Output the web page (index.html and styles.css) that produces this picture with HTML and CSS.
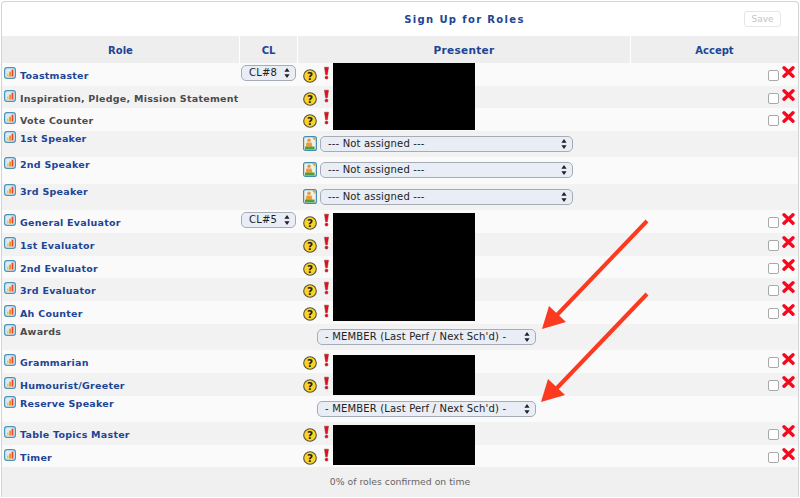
FILE: index.html
```html
<!DOCTYPE html>
<html lang="en">
<head>
<meta charset="utf-8">
<title>Sign Up for Roles</title>
<link rel="stylesheet" href="styles.css">
</head>
<body>
<svg width="0" height="0" class="defs">
  <defs>
    <symbol id="i-stat" viewBox="0 0 12 12">
      <rect x=".6" y=".6" width="10.8" height="10.8" rx="2.4" fill="#dcebf3" stroke="#4a93b8" stroke-width="1.2"/>
      <rect x="2.8" y="6.6" width="1.8" height="3" fill="#f8c04a"/>
      <rect x="5.2" y="4.6" width="1.8" height="5" fill="#f08a2a"/>
      <rect x="7.6" y="2.6" width="1.8" height="7" fill="#e5482a"/>
    </symbol>
    <symbol id="i-q" viewBox="0 0 14 14">
      <circle cx="7" cy="7" r="6.3" fill="#fbd225" stroke="#55523c" stroke-width="1.1"/>
      <text x="7" y="10.6" text-anchor="middle" class="q-mark">?</text>
    </symbol>
    <symbol id="i-ex" viewBox="0 0 7 14">
      <path d="M1.5 1.2h4L4.4 8.8H2.6z" fill="#e3101c" stroke="#8a2a2e" stroke-width=".5"/>
      <circle cx="3.5" cy="11.6" r="1.5" fill="#e3101c" stroke="#8a2a2e" stroke-width=".5"/>
    </symbol>
    <symbol id="i-x" viewBox="0 0 13 12">
      <path d="M2 1.8l9 8.4M11 1.8l-9 8.4" fill="none" stroke="#f5091f" stroke-width="3.4" stroke-linecap="round"/>
    </symbol>
    <symbol id="i-person" viewBox="0 0 14 15">
      <rect x=".6" y=".6" width="12.8" height="13.8" rx="2" fill="#f1efe2" stroke="#3f8db5" stroke-width="1.2"/>
      <circle cx="6" cy="4.2" r="1.8" fill="#d9a050"/>
      <path d="M3.4 6.4h5.2l.8 4.4H2.8z" fill="#ee9a3a"/>
      <path d="M2 10.6h9.6v2.9H2z" fill="#4c9f3f"/>
      <path d="M9 1.6h3.4V5z" fill="#cfa23a"/>
    </symbol>
  </defs>
</svg>

<main class="panel">
  <header class="grid titlebar">
    <h1 class="title">Sign Up for Roles</h1>
    <div class="save-cell"><button class="save" type="button" disabled>Save</button></div>
  </header>

  <div class="grid thead">
    <div class="th">Role</div>
    <div class="th">CL</div>
    <div class="th th-big">Presenter</div>
    <div class="th th-last">Accept</div>
  </div>

  <div class="grid row odd">
    <div class="role"><svg class="stat"><use href="#i-stat"/></svg><a class="name">Toastmaster</a></div>
    <div class="cl"><select class="sel sel-cl"><option>CL#8</option></select></div>
    <div class="pres"><svg class="q"><use href="#i-q"/></svg><svg class="ex"><use href="#i-ex"/></svg></div>
    <div class="acc"><input type="checkbox" class="chk"><svg class="x"><use href="#i-x"/></svg></div>
  </div>
  <div class="grid row even">
    <div class="role"><svg class="stat"><use href="#i-stat"/></svg><a class="name muted">Inspiration, Pledge, Mission Statement</a></div>
    <div class="cl"></div>
    <div class="pres"><svg class="q"><use href="#i-q"/></svg><svg class="ex"><use href="#i-ex"/></svg></div>
    <div class="acc"><input type="checkbox" class="chk"><svg class="x"><use href="#i-x"/></svg></div>
  </div>
  <div class="grid row odd">
    <div class="role"><svg class="stat"><use href="#i-stat"/></svg><a class="name muted">Vote Counter</a></div>
    <div class="cl"></div>
    <div class="pres"><svg class="q"><use href="#i-q"/></svg><svg class="ex"><use href="#i-ex"/></svg></div>
    <div class="acc"><input type="checkbox" class="chk"><svg class="x"><use href="#i-x"/></svg></div>
  </div>

  <div class="grid row tall even">
    <div class="role"><svg class="stat"><use href="#i-stat"/></svg><a class="name">1st Speaker</a></div>
    <div class="cl"></div>
    <div class="pres pres-sel"><svg class="person"><use href="#i-person"/></svg><select class="sel sel-na"><option>--- Not assigned ---</option></select></div>
    <div class="acc"></div>
  </div>
  <div class="grid row tall odd">
    <div class="role"><svg class="stat"><use href="#i-stat"/></svg><a class="name">2nd Speaker</a></div>
    <div class="cl"></div>
    <div class="pres pres-sel"><svg class="person"><use href="#i-person"/></svg><select class="sel sel-na"><option>--- Not assigned ---</option></select></div>
    <div class="acc"></div>
  </div>
  <div class="grid row tall even">
    <div class="role"><svg class="stat"><use href="#i-stat"/></svg><a class="name">3rd Speaker</a></div>
    <div class="cl"></div>
    <div class="pres pres-sel"><svg class="person"><use href="#i-person"/></svg><select class="sel sel-na"><option>--- Not assigned ---</option></select></div>
    <div class="acc"></div>
  </div>

  <div class="grid row odd">
    <div class="role"><svg class="stat"><use href="#i-stat"/></svg><a class="name">General Evaluator</a></div>
    <div class="cl"><select class="sel sel-cl"><option>CL#5</option></select></div>
    <div class="pres"><svg class="q"><use href="#i-q"/></svg><svg class="ex"><use href="#i-ex"/></svg></div>
    <div class="acc"><input type="checkbox" class="chk"><svg class="x"><use href="#i-x"/></svg></div>
  </div>
  <div class="grid row even">
    <div class="role"><svg class="stat"><use href="#i-stat"/></svg><a class="name">1st Evaluator</a></div>
    <div class="cl"></div>
    <div class="pres"><svg class="q"><use href="#i-q"/></svg><svg class="ex"><use href="#i-ex"/></svg></div>
    <div class="acc"><input type="checkbox" class="chk"><svg class="x"><use href="#i-x"/></svg></div>
  </div>
  <div class="grid row odd">
    <div class="role"><svg class="stat"><use href="#i-stat"/></svg><a class="name">2nd Evaluator</a></div>
    <div class="cl"></div>
    <div class="pres"><svg class="q"><use href="#i-q"/></svg><svg class="ex"><use href="#i-ex"/></svg></div>
    <div class="acc"><input type="checkbox" class="chk"><svg class="x"><use href="#i-x"/></svg></div>
  </div>
  <div class="grid row even">
    <div class="role"><svg class="stat"><use href="#i-stat"/></svg><a class="name">3rd Evaluator</a></div>
    <div class="cl"></div>
    <div class="pres"><svg class="q"><use href="#i-q"/></svg><svg class="ex"><use href="#i-ex"/></svg></div>
    <div class="acc"><input type="checkbox" class="chk"><svg class="x"><use href="#i-x"/></svg></div>
  </div>
  <div class="grid row odd">
    <div class="role"><svg class="stat"><use href="#i-stat"/></svg><a class="name">Ah Counter</a></div>
    <div class="cl"></div>
    <div class="pres"><svg class="q"><use href="#i-q"/></svg><svg class="ex"><use href="#i-ex"/></svg></div>
    <div class="acc"><input type="checkbox" class="chk"><svg class="x"><use href="#i-x"/></svg></div>
  </div>

  <div class="grid row tall even">
    <div class="role"><svg class="stat"><use href="#i-stat"/></svg><a class="name muted">Awards</a></div>
    <div class="cl"></div>
    <div class="pres pres-sel"><select class="sel sel-member"><option>- MEMBER (Last Perf / Next Sch'd) -</option></select></div>
    <div class="acc"></div>
  </div>

  <div class="grid row odd">
    <div class="role"><svg class="stat"><use href="#i-stat"/></svg><a class="name">Grammarian</a></div>
    <div class="cl"></div>
    <div class="pres"><svg class="q"><use href="#i-q"/></svg><svg class="ex"><use href="#i-ex"/></svg></div>
    <div class="acc"><input type="checkbox" class="chk"><svg class="x"><use href="#i-x"/></svg></div>
  </div>
  <div class="grid row even">
    <div class="role"><svg class="stat"><use href="#i-stat"/></svg><a class="name">Humourist/Greeter</a></div>
    <div class="cl"></div>
    <div class="pres"><svg class="q"><use href="#i-q"/></svg><svg class="ex"><use href="#i-ex"/></svg></div>
    <div class="acc"><input type="checkbox" class="chk"><svg class="x"><use href="#i-x"/></svg></div>
  </div>

  <div class="grid row tall odd">
    <div class="role"><svg class="stat"><use href="#i-stat"/></svg><a class="name">Reserve Speaker</a></div>
    <div class="cl"></div>
    <div class="pres pres-sel"><select class="sel sel-member"><option>- MEMBER (Last Perf / Next Sch'd) -</option></select></div>
    <div class="acc"></div>
  </div>

  <div class="grid row even">
    <div class="role"><svg class="stat"><use href="#i-stat"/></svg><a class="name">Table Topics Master</a></div>
    <div class="cl"></div>
    <div class="pres"><svg class="q"><use href="#i-q"/></svg><svg class="ex"><use href="#i-ex"/></svg></div>
    <div class="acc"><input type="checkbox" class="chk"><svg class="x"><use href="#i-x"/></svg></div>
  </div>
  <div class="grid row odd">
    <div class="role"><svg class="stat"><use href="#i-stat"/></svg><a class="name">Timer</a></div>
    <div class="cl"></div>
    <div class="pres"><svg class="q"><use href="#i-q"/></svg><svg class="ex"><use href="#i-ex"/></svg></div>
    <div class="acc"><input type="checkbox" class="chk"><svg class="x"><use href="#i-x"/></svg></div>
  </div>

  <footer class="foot">0% of roles confirmed on time</footer>
</main>

<div class="redact r1"></div>
<div class="redact r2"></div>
<div class="redact r3"></div>
<div class="redact r4"></div>

<svg class="arrows" viewBox="0 0 800 498" width="800" height="498">
  <g class="arrow">
    <line x1="647" y1="221" x2="556" y2="316"/>
    <polygon points="542,329 549,306 566,322"/>
  </g>
  <g class="arrow">
    <line x1="647" y1="294" x2="556" y2="389"/>
    <polygon points="541,402 548,379 565,395"/>
  </g>
</svg>
</body>
</html>
```
FILE: styles.css
```css
* { box-sizing: border-box; }
html, body { margin: 0; padding: 0; background: #fff; }
body { width: 800px; height: 498px; overflow: hidden; position: relative; font-family: "DejaVu Sans", Verdana, sans-serif; }
.defs { position: absolute; }

.panel {
  margin: 1px 1px 0;
  height: 496px;
  border: 1px solid #d4d4d4;
  border-bottom: 0;
  border-radius: 4px 4px 0 0;
  background: #fff;
}

.grid { display: grid; grid-template-columns: 238px 58px 333px 1fr; }

.titlebar { height: 34px; align-items: start; }
.title {
  grid-column: 3;
  margin: 11px 0 0;
  font-size: 10px;
  line-height: 14px;
  font-weight: 700;
  letter-spacing: 1.35px;
  text-align: center;
  color: #1c4596;
}
.save-cell { display: flex; justify-content: flex-end; padding: 9px 17px 0 0; }
.save {
  width: 37px;
  height: 16px;
  padding: 0;
  border: 1px solid #e6e6e6;
  border-radius: 3px;
  background: #fff;
  color: #c4c4c4;
  font: 9px/14px "DejaVu Sans", sans-serif;
}

.thead { height: 27px; background: #eeeeee; }
.th {
  padding-top: 1px;
  border-right: 1px solid #fff;
  font-size: 10px;
  font-weight: 700;
  line-height: 27px;
  text-align: center;
  color: #1c4596;
}
.th-big { font-size: 10.5px; letter-spacing: .3px; }
.th-last { border-right: 0; }

.row { height: 22.67px; align-items: start; }
.row.tall { height: 26.5px; }
.odd { background: #fafafa; }
.even { background: #f2f2f2; }

.role { display: flex; align-items: flex-start; padding: 4px 0 0 2px; white-space: nowrap; }
.tall .role { padding-top: 0; }
.stat { width: 12px; height: 12px; flex: none; }
.name {
  margin: 3px 0 0 4px;
  font-size: 9.5px;
  font-weight: 700;
  line-height: 12px;
  letter-spacing: .25px;
  color: #1c4596;
}
.tall .name { margin-top: 2px; }
.muted { color: #4b4b4b; }

.cl { padding: 2px 0 0 1px; }

.pres { display: flex; align-items: flex-start; padding: 3px 0 0 5px; }
.pres-sel { padding: 5px 0 0 5px; }
.q { width: 14px; height: 14px; margin-top: 3px; flex: none; }
.q-mark { font: 700 10.5px "DejaVu Sans", sans-serif; fill: #222; }
.ex { width: 7px; height: 14px; margin-left: 6px; flex: none; }
.person { width: 14px; height: 15px; flex: none; margin-right: 3px; }

.acc { display: flex; justify-content: flex-end; align-items: flex-start; padding: 3px 3px 0 0; }
.chk {
  appearance: none;
  width: 11px;
  height: 11px;
  margin: 4px 3px 0 0;
  border: 1px solid #a9a9a9;
  border-radius: 2px;
  background: #fff;
}
.x { width: 13px; height: 12px; flex: none; }

.sel {
  appearance: none;
  display: block;
  height: 16px;
  padding: 0 14px 0 7px;
  border: 1px solid #a6acb6;
  border-radius: 5px;
  color: #222;
  font: 10px/14px "DejaVu Sans", sans-serif;
  letter-spacing: .17px;
  background-color: #e9edf5;
  background-image: url("data:image/svg+xml,%3Csvg xmlns='http://www.w3.org/2000/svg' width='6' height='10'%3E%3Cpath d='M3 0l2.6 3.8H.4zM3 10l2.6-3.8H.4z' fill='%23222'/%3E%3C/svg%3E");
  background-repeat: no-repeat;
  background-position: right 5px center;
}
.sel-cl { width: 55px; }
.sel-na { width: 253px; }
.sel-member { width: 219px; margin-left: 14px; }

.foot {
  height: 30px;
  background: #f0f0f0;
  font-size: 9.3px;
  line-height: 30px;
  text-align: center;
  color: #666;
}

.redact { position: absolute; left: 333px; width: 142px; background: #000; }
.r1 { top: 63px; height: 67px; }
.r2 { top: 213px; height: 108px; }
.r3 { top: 355px; height: 40px; }
.r4 { top: 425px; height: 40px; }

.arrows { position: absolute; left: 0; top: 0; pointer-events: none; }
.arrow line { stroke: #fb3a20; stroke-width: 4; }
.arrow polygon { fill: #fb3a20; }
```
